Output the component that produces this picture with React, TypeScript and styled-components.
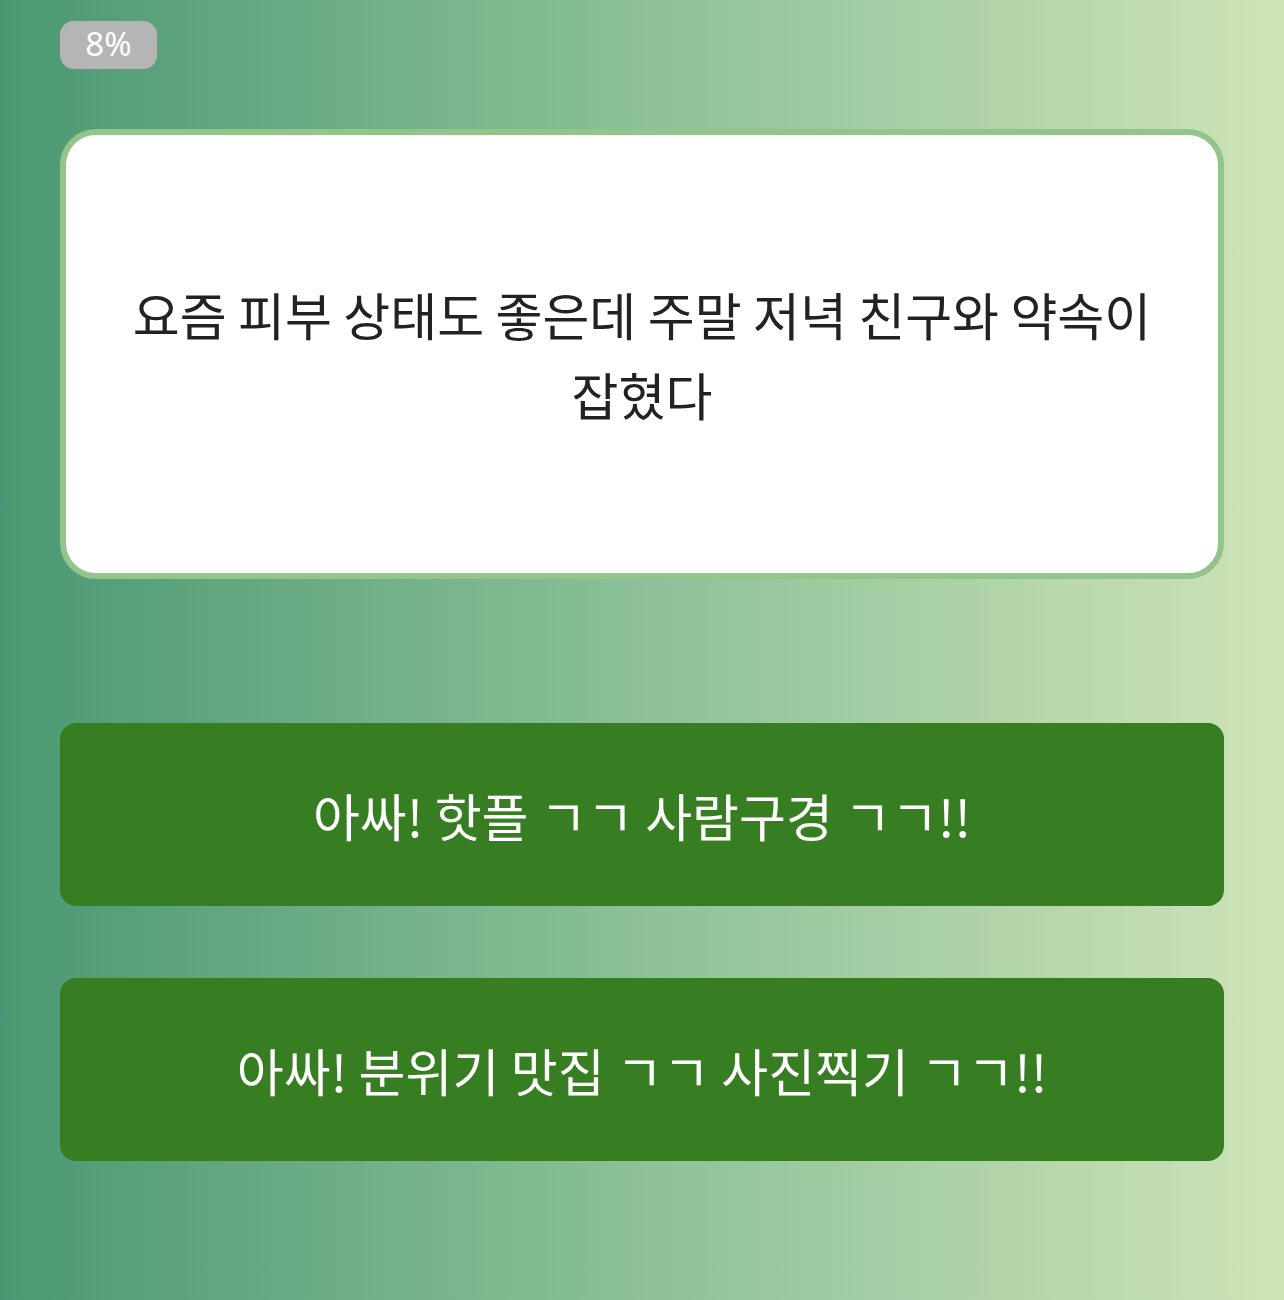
import React from 'react';
import styled, { createGlobalStyle } from 'styled-components';

const GlobalStyle = createGlobalStyle`
  html, body {
    margin: 0;
    padding: 0;
  }
  body {
    font-family: 'Noto Sans CJK KR', 'Noto Sans', sans-serif;
    background: linear-gradient(90deg, #4a9873 0%, #8cc197 50%, #cfe3b8 100%);
    min-height: 1300px;
  }
`;

interface IChoice {
  id: number;
  label: string;
}

const choices: IChoice[] = [
  { id: 1, label: '아싸! 핫플 ㄱㄱ 사람구경 ㄱㄱ!!' },
  { id: 2, label: '아싸! 분위기 맛집 ㄱㄱ 사진찍기 ㄱㄱ!!' },
];

function App(): JSX.Element {
  return (
    <>
      <GlobalStyle />
      <Container>
        <Progress>8%</Progress>
        <QuestionCard>
          <p>요즘 피부 상태도 좋은데 주말 저녁 친구와 약속이 잡혔다</p>
        </QuestionCard>
        <ChoiceList>
          {choices.map((choice) => (
            <ChoiceButton key={choice.id}>{choice.label}</ChoiceButton>
          ))}
        </ChoiceList>
      </Container>
    </>
  );
}

export default App;

const Container = styled.main`
  box-sizing: border-box;
  min-height: 1300px;
  padding: 21px 60px 0;
  display: flex;
  flex-direction: column;
  align-items: flex-start;
`;

const Progress = styled.div`
  box-sizing: border-box;
  width: 97px;
  height: 48px;
  padding-bottom: 3px;
  border-radius: 14px;
  background: #b5b5b5;
  color: #ffffff;
  font-family: 'Noto Sans', 'Noto Sans CJK KR', sans-serif;
  font-size: 33px;
  font-weight: 400;
  display: flex;
  align-items: center;
  justify-content: center;
`;

const QuestionCard = styled.section`
  box-sizing: border-box;
  margin-top: 60px;
  width: 100%;
  height: 450px;
  padding: 0 50px;
  background: #ffffff;
  border: 6px solid #93c48b;
  border-radius: 36px;
  display: flex;
  align-items: center;
  justify-content: center;

  p {
    margin: 0;
    text-align: center;
    font-size: 51px;
    line-height: 80px;
    color: #222222;
    word-break: keep-all;
  }
`;

const ChoiceList = styled.div`
  margin-top: 144px;
  width: 100%;
  display: flex;
  flex-direction: column;
  gap: 72px;
`;

const ChoiceButton = styled.button`
  box-sizing: border-box;
  width: 100%;
  height: 183px;
  border: none;
  border-radius: 16px;
  background: #377d22;
  color: #ffffff;
  font-family: inherit;
  font-size: 51px;
  word-break: keep-all;
  cursor: pointer;
`;
